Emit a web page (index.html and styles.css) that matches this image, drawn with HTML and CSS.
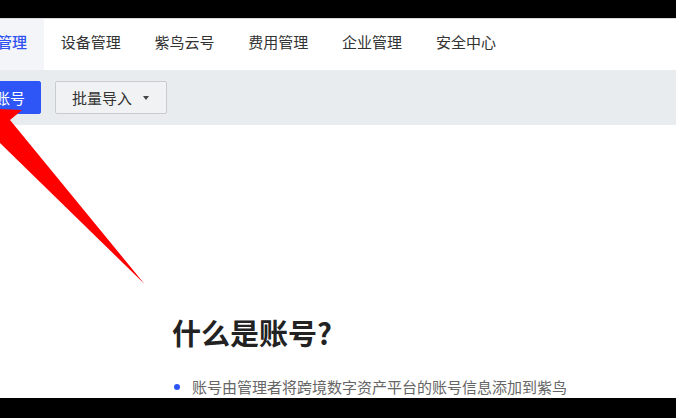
FILE: index.html
```html
<!DOCTYPE html>
<html lang="zh-CN">
<head>
<meta charset="utf-8">
<title>账号管理</title>
<link rel="stylesheet" href="styles.css">
</head>
<body>
<div class="frame-top"></div>
<div class="app">
  <nav class="nav">
    <a class="nav-item active">账号管理</a>
    <a class="nav-item">设备管理</a>
    <a class="nav-item">紫鸟云号</a>
    <a class="nav-item">费用管理</a>
    <a class="nav-item">企业管理</a>
    <a class="nav-item">安全中心</a>
  </nav>
  <div class="toolbar">
    <button class="btn btn-primary">添加账号</button>
    <button class="btn btn-default">批量导入<span class="caret"></span></button>
  </div>
  <main class="content">
    <h1 class="title">什么是账号?</h1>
    <ul class="bullets">
      <li>账号由管理者将跨境数字资产平台的账号信息添加到紫鸟浏览器</li>
    </ul>
  </main>
  <svg class="arrow" width="160" height="300" viewBox="0 0 160 300" aria-hidden="true">
    <polygon points="0,109 22,110 10,120 144.5,284 0,143" fill="#ff0000"/>
  </svg>
</div>
<div class="frame-bottom"></div>
</body>
</html>
```

FILE: styles.css
```css
* { box-sizing: border-box; }
html, body {
  margin: 0;
  padding: 0;
  width: 676px;
  height: 418px;
  overflow: hidden;
  background: #000;
  font-family: "Noto Sans CJK SC", "Noto Sans", sans-serif;
}
.frame-top {
  height: 18px;
  background: #000;
  border-bottom: 1px solid #d8d8d8;
  box-sizing: content-box;
}
.frame-bottom {
  height: 20px;
  background: #000;
}
.app {
  position: relative;
  height: 379px;
  background: #fff;
  overflow: hidden;
}
.nav {
  display: flex;
  height: 51px;
  margin-left: -50px;
  background: #fff;
}
.nav-item {
  display: flex;
  align-items: center;
  padding: 0 16.9px 6px;
  font-size: 15px;
  color: #333;
  white-space: nowrap;
}
.nav-item.active {
  background: #f3f5f8;
  color: #2f52f0;
  font-weight: 500;
}
.toolbar {
  display: flex;
  align-items: center;
  gap: 14px;
  height: 55px;
  margin-left: -52px;
  background: #e9ecef;
}
.btn {
  height: 33px;
  font-family: inherit;
  font-size: 15px;
  border-radius: 2px;
  display: flex;
  align-items: center;
  white-space: nowrap;
}
.btn-primary {
  width: 93px;
  padding: 0 16px;
  background: #2e55f6;
  color: #fff;
  border: 1px solid #2e55f6;
}
.btn-default {
  width: 112px;
  padding: 0 0 0 16px;
  background: #f1f2f4;
  color: #333;
  border: 1px solid #c9cbce;
}
.caret {
  width: 0;
  height: 0;
  margin-left: 11px;
  border-left: 3.5px solid transparent;
  border-right: 3.5px solid transparent;
  border-top: 4px solid #444;
}
.content {
  padding: 187px 0 0 172px;
}
.title {
  margin: 0;
  font-size: 29px;
  line-height: 40px;
  font-weight: 700;
  color: #222;
  white-space: nowrap;
}
.bullets {
  margin: 23px 0 0;
  padding: 0;
  list-style: none;
  width: 400px;
}
.bullets li {
  position: relative;
  padding-left: 20px;
  font-size: 15px;
  line-height: 24px;
  color: #666;
}
.bullets li::before {
  content: "";
  position: absolute;
  left: 2px;
  top: 9px;
  width: 6px;
  height: 6px;
  border-radius: 50%;
  background: #2e55f6;
}
.arrow {
  position: absolute;
  left: 0;
  top: -19px;
}
```
